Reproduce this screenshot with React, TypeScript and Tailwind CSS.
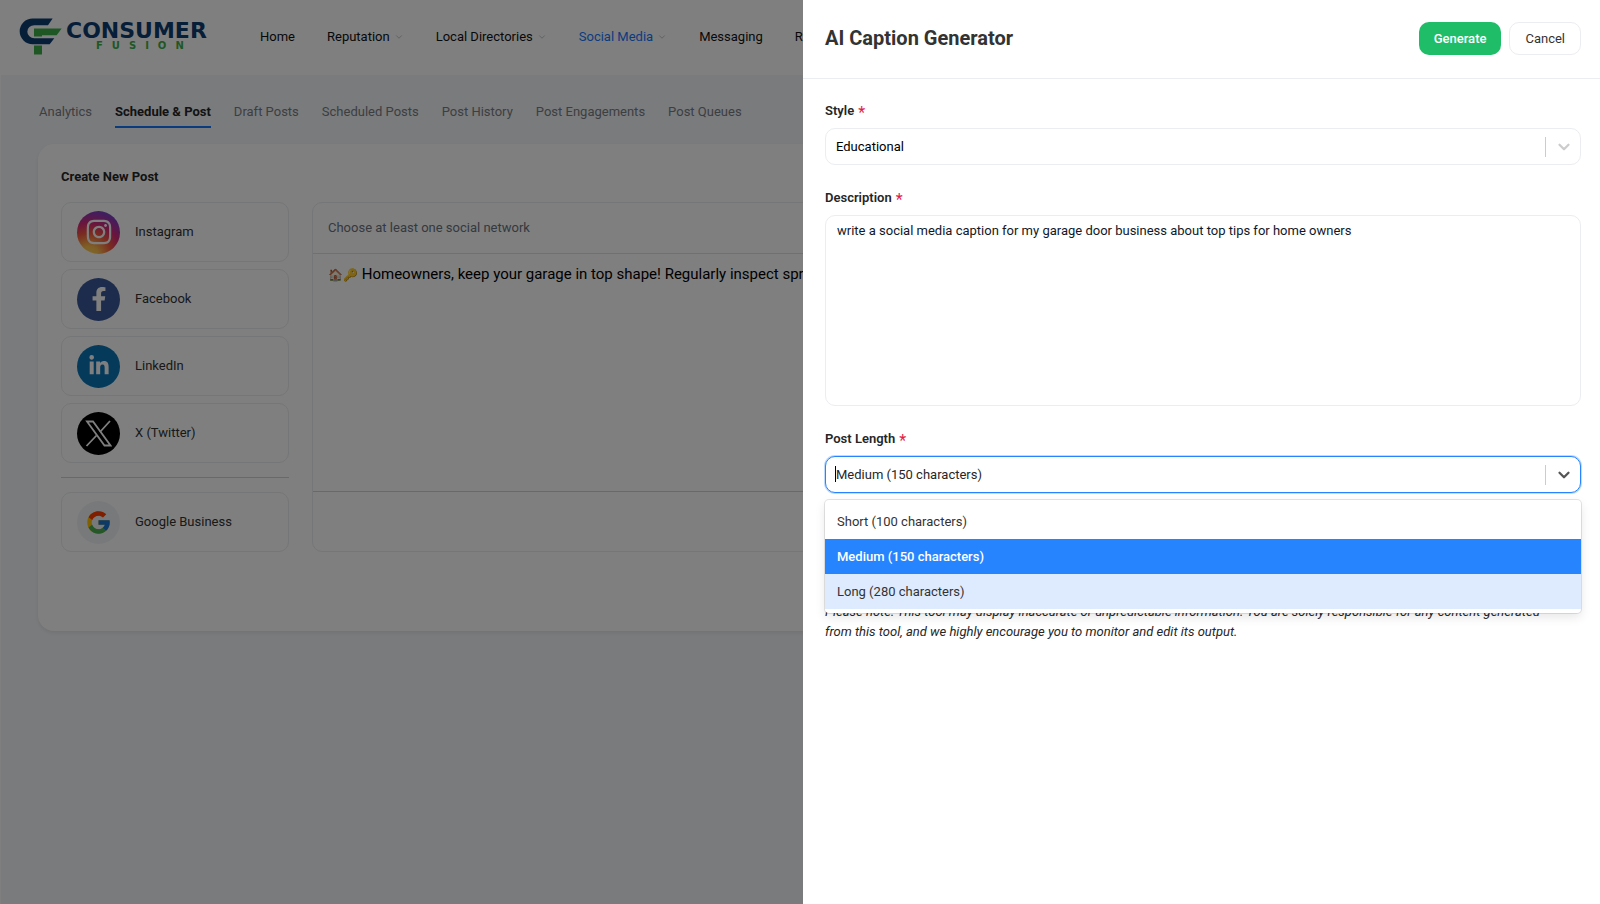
import { useState } from "react";
import { ChevronDown } from "lucide-react";
import { FaFacebookF, FaLinkedinIn, FaInstagram } from "react-icons/fa";
import { FcGoogle } from "react-icons/fc";

const navItems = [
  { label: "Home", menu: false },
  { label: "Reputation", menu: true },
  { label: "Local Directories", menu: true },
  { label: "Social Media", menu: true, active: true },
  { label: "Messaging", menu: false },
  { label: "R", menu: false },
];

const tabs = [
  "Analytics",
  "Schedule & Post",
  "Draft Posts",
  "Scheduled Posts",
  "Post History",
  "Post Engagements",
  "Post Queues",
];

const networks = [
  {
    name: "Instagram",
    circle:
      "bg-[radial-gradient(circle_at_28%_105%,#fdd55c_0%,#fdc04e_18%,#f4583f_42%,#d62a78_60%,#8a3ab9_80%,#4c63d2_100%)] text-white",
    icon: <FaInstagram size={28} />,
  },
  { name: "Facebook", circle: "bg-[#3b5998] text-white", icon: <FaFacebookF size={24} /> },
  { name: "LinkedIn", circle: "bg-[#0a75b5] text-white", icon: <FaLinkedinIn size={22} /> },
  { name: "X (Twitter)", circle: "bg-black text-white", icon: <XMark /> },
];

const lengths = ["Short (100 characters)", "Medium (150 characters)", "Long (280 characters)"];

function XMark() {
  return (
    <svg width="27" height="27" viewBox="0 0 27 27" fill="none" stroke="currentColor">
      <path d="M2 1.500h6L25.500 25.500h-6z" strokeWidth="1.800" />
      <path d="M25 1L15 12M11.500 15.500L1.500 26" strokeWidth="1.800" />
    </svg>
  );
}

function Logo() {
  return (
    <a href="#" className="flex w-[195px] shrink-0 items-center gap-1" aria-label="Consumer Fusion">
      <svg width="43" height="37" viewBox="57 56 129 110" className="shrink-0">
        <path
          d="M158 57H98a39 38.500 0 0 0 0 77h51l14-18h-60a21 19.500 0 0 1 0-39h41z"
          fill="#0f3c73"
        />
        <path d="M102 87h83l-15 20h-44v4h-24zM102 138h24v27h-24z" fill="#3fae49" />
      </svg>
      <span className="flex flex-col font-['DejaVu_Sans'] font-bold">
        <span className="text-[22px] leading-[18px] text-[#0f3c73]">CONSUMER</span>
        <span className="pl-[30px] text-[10px] leading-3 tracking-[0.9em] text-[#3fae49]">FUSION</span>
      </span>
    </a>
  );
}

function NetworkCard({ name, circle, icon }: { name: string; circle: string; icon: React.ReactNode }) {
  return (
    <button
      type="button"
      className="flex h-[60px] w-full items-center gap-[15px] rounded-[10px] border border-[#ebecee] px-[15px] text-left text-[#333]"
    >
      <span className={`flex size-[43px] shrink-0 items-center justify-center rounded-full ${circle}`}>{icon}</span>
      {name}
    </button>
  );
}

function Label({ id, text }: { id: string; text: string }) {
  return (
    <label htmlFor={id} className="mb-[7px] flex h-5 items-center gap-1 font-semibold text-[#262626]">
      {text}
      <span className="pt-1 text-base font-normal leading-4 text-[#e11d48]">*</span>
    </label>
  );
}

export default function App() {
  const [style, setStyle] = useState("Educational");
  const [length, setLength] = useState(lengths[1]);
  const [description, setDescription] = useState(
    "write a social media caption for my garage door business about top tips for home owners"
  );

  return (
    <div className="min-h-screen overflow-hidden border-l border-white bg-[#f5f7fa] font-[Roboto,sans-serif] text-[13px]">
      {/* Header */}
      <header className="flex h-[75px] items-center bg-white pb-0.5 pl-[18px]">
        <Logo />
        <nav className="ml-[46px] flex gap-8 whitespace-nowrap">
          {navItems.map((item) => (
            <a
              key={item.label}
              href="#"
              className={`flex items-center gap-1 ${item.active ? "text-[#1677ff]" : "text-[#0f1115]"}`}
            >
              {item.label}
              {item.menu && <ChevronDown size={10} strokeWidth={2} className="text-[#b5b8bd]" />}
            </a>
          ))}
        </nav>
      </header>

      {/* Tabs */}
      <nav className="flex gap-[23px] px-[38px] pt-[27px] whitespace-nowrap">
        {tabs.map((tab) => (
          <a
            key={tab}
            href="#"
            className={
              tab === "Schedule & Post"
                ? "border-b-2 border-[#1677ff] pb-1 font-bold leading-5 text-[#262626]"
                : "pb-1 leading-5 text-[#7a7d84]"
            }
          >
            {tab}
          </a>
        ))}
      </nav>

      {/* Create post */}
      <main className="mx-[37px] mt-4 h-[487px] rounded-2xl bg-white px-[23px] pt-[23px] shadow-[0_2px_4px_rgba(0,0,0,0.08)]">
        <h2 className="font-bold leading-5 text-[#262626]">Create New Post</h2>
        <div className="mt-[15px] flex gap-[23px]">
          <div className="flex w-[228px] shrink-0 flex-col gap-[7px]">
            {networks.map((n) => (
              <NetworkCard key={n.name} {...n} />
            ))}
            <hr className="my-[7px] border-[#d0d2d5]" />
            <NetworkCard name="Google Business" circle="bg-[#f0f3f7]" icon={<FcGoogle size={27} />} />
          </div>
          <section className="flex flex-1 flex-col rounded-[10px] border border-[#ebecee] whitespace-nowrap">
            <p className="border-b border-[#dfe1e4] px-[15px] py-4 leading-[18px] text-[#6b7280]">
              Choose at least one social network
            </p>
            <p className="flex-1 overflow-hidden px-[15px] py-2 text-[15px] leading-6 text-black">
              <span className="text-xs">🏠🔑</span> Homeowners, keep your garage in top shape! Regularly inspect springs
              and cables.
            </p>
            <div className="h-[60px] border-t border-[#d0d2d5]" />
          </section>
        </div>
      </main>

      <div className="fixed inset-0 bg-black/50" />

      {/* Drawer */}
      <aside className="fixed inset-y-0 right-0 w-[calc(50%-3px)] bg-white">
        <header className="flex h-[79px] items-start gap-2 border-b border-[#ebedf0] pt-[22px] pr-[19px] pl-[22px]">
          <h1 className="mr-auto text-[20px] font-bold leading-8 text-[#333]">AI Caption Generator</h1>
          <button type="button" className="h-[33px] rounded-[10px] bg-[#1fbd68] px-[15px] font-medium text-white">
            Generate
          </button>
          <button type="button" className="h-[33px] rounded-[10px] border border-[#ebedf0] px-[15px] text-[#333]">
            Cancel
          </button>
        </header>

        <form className="pt-[22px] pr-[19px] pl-[22px]" onSubmit={(e) => e.preventDefault()}>
          <Label id="style" text="Style" />
          <div className="relative">
            <select
              id="style"
              value={style}
              onChange={(e) => setStyle(e.target.value)}
              className="h-[37px] w-full appearance-none rounded-[10px] border border-[#ebedf0] bg-white px-[10px] text-black outline-none"
            >
              <option>Educational</option>
              <option>Promotional</option>
            </select>
            <div className="pointer-events-none absolute inset-y-0 right-2 flex items-center gap-[9px]">
              <span className="h-5 w-px bg-[#ccc]" />
              <ChevronDown size={18} strokeWidth={3} className="text-[#ccc]" />
            </div>
          </div>

          <div className="mt-[23px]">
            <Label id="description" text="Description" />
            <textarea
              id="description"
              value={description}
              onChange={(e) => setDescription(e.target.value)}
              className="block h-[191px] w-full resize-none rounded-[10px] border border-[#ebedf0] px-[11px] py-[5px] leading-5 text-[#111827] outline-none"
            />
          </div>

          <div className="mt-[23px]">
            <Label id="length" text="Post Length" />
            <div className="relative">
              <select
                id="length"
                value={length}
                onChange={(e) => setLength(e.target.value)}
                className="h-[37px] w-full appearance-none rounded-[10px] border border-[#2684ff] bg-white px-[10px] text-[#262626] ring-1 ring-[#2684ff]/30 outline-none"
              >
                {lengths.map((l) => (
                  <option key={l}>{l}</option>
                ))}
              </select>
              <span className="pointer-events-none absolute top-2.5 left-2.5 h-4 w-px bg-black" />
              <div className="pointer-events-none absolute inset-y-0 right-2 flex items-center gap-[9px]">
                <span className="h-5 w-px bg-[#ccc]" />
                <ChevronDown size={18} strokeWidth={3} className="text-[#555]" />
              </div>

              {/* Options menu */}
              <ul
                role="listbox"
                aria-label="Post Length"
                className="absolute inset-x-0 top-full mt-[7px] rounded bg-white py-1 shadow-[0_0_0_1px_rgba(0,0,0,0.1),0_4px_11px_rgba(0,0,0,0.1)]"
              >
                {lengths.map((l, i) => (
                  <li
                    key={l}
                    role="option"
                    aria-selected={l === length}
                    onClick={() => setLength(l)}
                    className={`flex h-[35px] items-center px-3 ${
                      l === length ? "bg-[#2684ff] font-medium text-white" : i === 2 ? "bg-[#deebff] text-[#333]" : "text-[#333]"
                    }`}
                  >
                    {l}
                  </li>
                ))}
              </ul>
            </div>
          </div>

          <p className="mt-[109px] pr-3 leading-5 text-[#262626] italic">
            Please note: This tool may display inaccurate or unpredictable information. You are solely responsible for any
            content generated from this tool, and we highly encourage you to monitor and edit its output.
          </p>
        </form>
      </aside>
    </div>
  );
}
